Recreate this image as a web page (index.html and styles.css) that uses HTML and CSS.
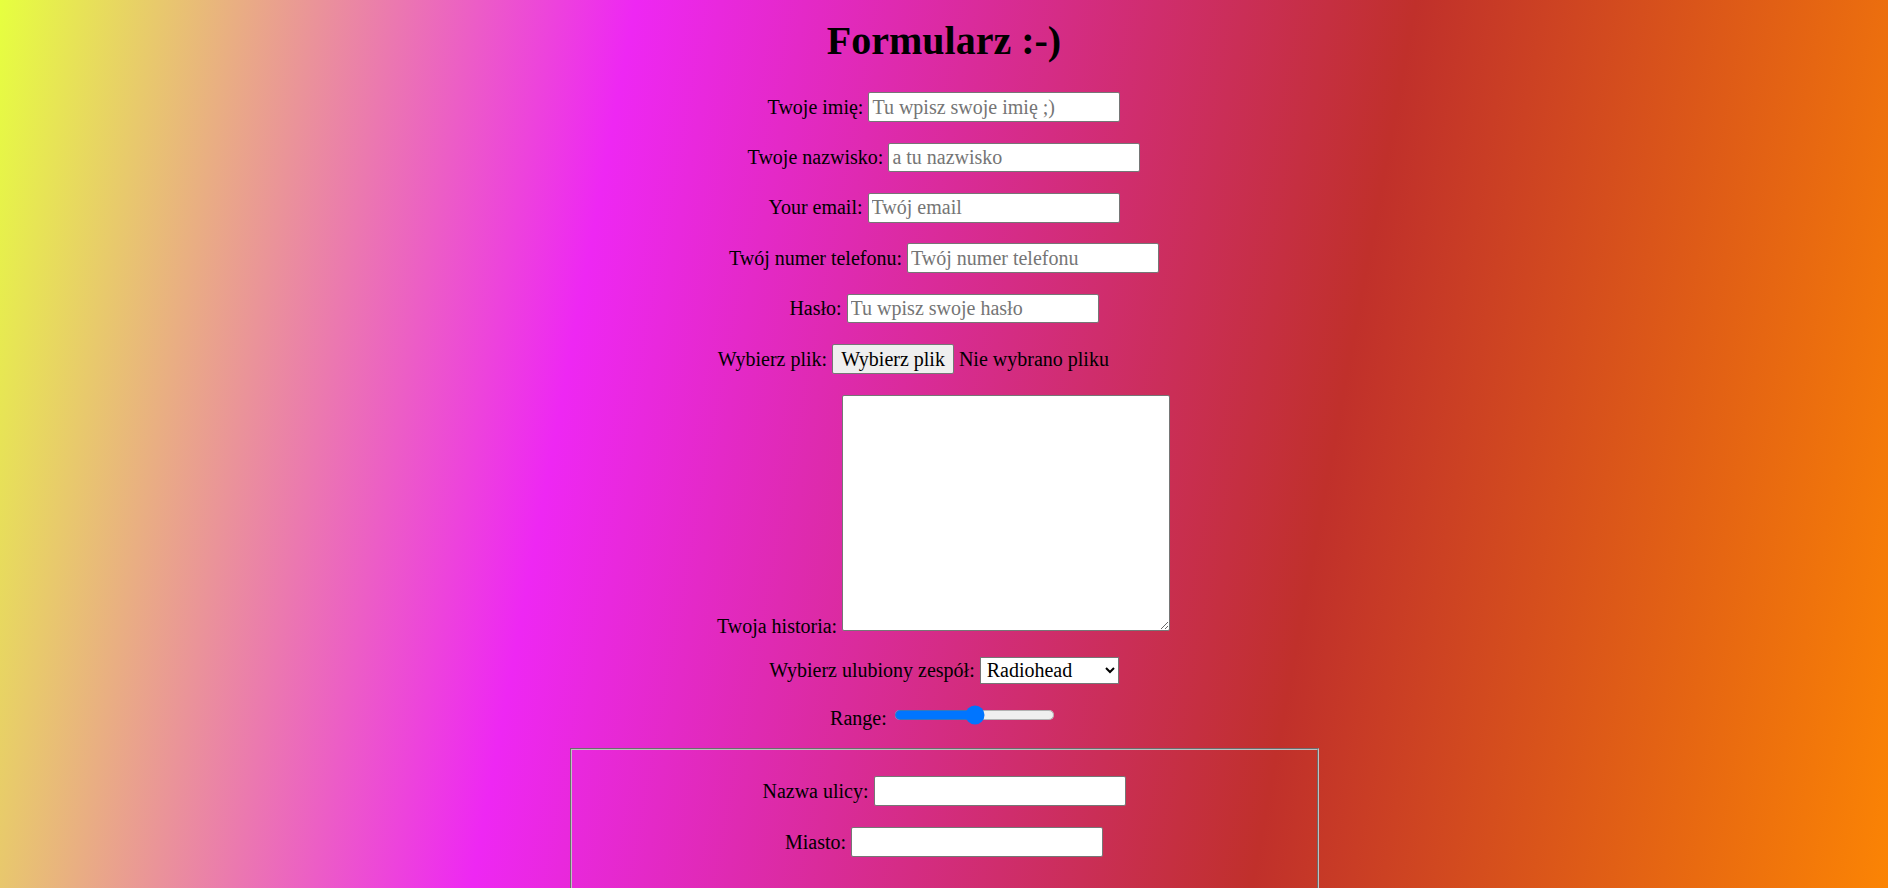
FILE: index.html
```html
<!DOCTYPE html>
<html lang="pl">
<head>
<meta charset="utf-8">
<title>Formularz :-)</title>
<link rel="stylesheet" href="styles.css">
</head>
<body>
<h1 class="title">Formularz :-)</h1>
<form class="form">
  <div class="row">
    <label class="label" for="imie">Twoje imię:</label>
    <input class="field" id="imie" type="text" placeholder="Tu wpisz swoje imię ;)">
  </div>
  <div class="row">
    <label class="label" for="nazwisko">Twoje nazwisko:</label>
    <input class="field" id="nazwisko" type="text" placeholder="a tu nazwisko">
  </div>
  <div class="row">
    <label class="label" for="email">Your email:</label>
    <input class="field" id="email" type="email" placeholder="Twój email">
  </div>
  <div class="row">
    <label class="label" for="tel">Twój numer telefonu:</label>
    <input class="field" id="tel" type="tel" placeholder="Twój numer telefonu">
  </div>
  <div class="row">
    <label class="label" for="haslo">Hasło:</label>
    <input class="field" id="haslo" type="password" placeholder="Tu wpisz swoje hasło">
  </div>
  <div class="row">
    <label class="label" for="plik">Wybierz plik:</label>
    <span class="file">
      <button class="file-btn" id="plik" type="button">Wybierz plik</button>
      <span class="file-name">Nie wybrano pliku</span>
    </span>
  </div>
  <div class="row row-story">
    <label class="label story-label" for="historia">Twoja historia:</label>
    <textarea class="story" id="historia"></textarea>
  </div>
  <div class="row row-select">
    <label class="label" for="zespol">Wybierz ulubiony zespół:</label>
    <select class="select" id="zespol">
      <option>Radiohead</option>
      <option>Muse</option>
      <option>Coldplay</option>
    </select>
  </div>
  <div class="row row-range">
    <label class="label" for="zakres">Range:</label>
    <input class="range" id="zakres" type="range" min="0" max="100" value="50">
  </div>
  <fieldset class="address">
    <div class="row">
      <label class="label" for="ulica">Nazwa ulicy:</label>
      <input class="field" id="ulica" type="text">
    </div>
    <div class="row">
      <label class="label" for="miasto">Miasto:</label>
      <input class="field" id="miasto" type="text">
    </div>
  </fieldset>
</form>
</body>
</html>
```

FILE: styles.css
```css
html {
  background: linear-gradient(100.5deg, #e6ff3f 0%, #ee27f3 31%, #c0302b 69%, #fb8404 100%) fixed;
  min-height: 100%;
}

body {
  margin: 0 8px;
  font-family: "Liberation Serif", "Times New Roman", serif;
  font-size: 20px;
  color: #000;
}

.title {
  margin: 18px 0 0;
  font-size: 40px;
  line-height: 46px;
  font-weight: bold;
  text-align: center;
}

.form {
  display: flex;
  flex-direction: column;
  gap: 20.9px;
  padding-top: 28.3px;
}

.row {
  display: flex;
  justify-content: center;
  align-items: center;
  gap: 5px;
}

.label {
  line-height: 23px;
  white-space: nowrap;
}

.field {
  box-sizing: border-box;
  width: 252px;
  height: 29.5px;
  margin: 0;
  padding: 0 3px;
  border: 1px solid #767676;
  border-radius: 2px;
  background: #fff;
  font-family: inherit;
  font-size: 20px;
  line-height: 23px;
  color: #000;
}

.field::placeholder {
  color: #757575;
  opacity: 1;
}

.file {
  display: flex;
  align-items: center;
  gap: 5px;
  width: 338px;
}

.file-btn {
  box-sizing: border-box;
  height: 30px;
  margin: 0;
  padding: 0 8px;
  border: 1px solid #767676;
  border-radius: 2px;
  background: #efefef;
  font-family: inherit;
  font-size: 20px;
  line-height: 23px;
  color: #000;
}

.file-name {
  line-height: 23px;
  white-space: nowrap;
}

.row-story {
  align-items: flex-end;
  margin-left: -1px;
}

.story-label {
  margin-bottom: -7px;
}

.story {
  box-sizing: border-box;
  width: 328px;
  height: 236px;
  margin: 0;
  padding: 2px;
  border: 1px solid #767676;
  border-radius: 2px;
  background: #fff;
  font-family: inherit;
  font-size: 20px;
}

.row-select {
  margin-top: 5.2px;
}

.range {
  zoom: 1.25;
  margin: 0 2px 6px;
}

.select {
  box-sizing: border-box;
  width: 139px;
  height: 26.5px;
  margin: 0;
  padding: 0 2px;
  border: 1px solid #767676;
  border-radius: 0;
  background-color: #fff;
  font-family: inherit;
  font-size: 20px;
  color: #000;
}

.address {
  box-sizing: border-box;
  width: 749px;
  margin: -4.9px auto 0;
  padding: 26.3px 12px 40px;
  border: 2px groove rgb(192, 192, 192);
  display: flex;
  flex-direction: column;
  gap: 21.5px;
  min-width: 0;
}
```
